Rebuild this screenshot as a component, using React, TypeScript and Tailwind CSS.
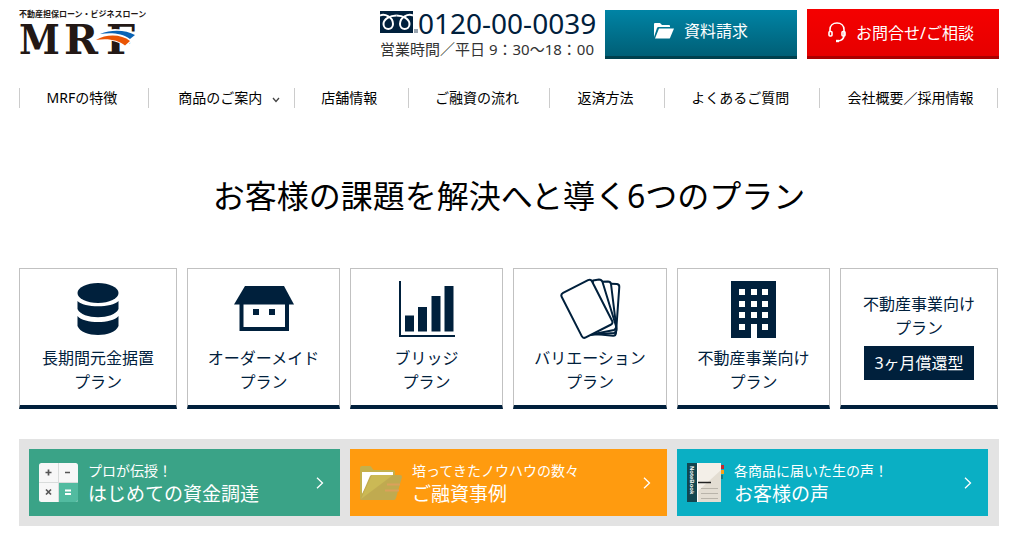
import React from "react";

const navItems = [
	{ label: "MRFの特徴" },
	{ label: "商品のご案内", hasMenu: true },
	{ label: "店舗情報" },
	{ label: "ご融資の流れ" },
	{ label: "返済方法" },
	{ label: "よくあるご質問" },
	{ label: "会社概要／採用情報" },
];

function Logo() {
	return (
		<a href="#" className="block w-32 text-[#231815]">
			<span className="block text-[8px] leading-[10px] font-bold whitespace-nowrap">不動産担保ローン・ビジネスローン</span>
			<svg viewBox="0 0 128 48" className="block w-32 h-12 overflow-visible" role="img" aria-label="MRF">
				<g fill="#231815" fontFamily="'DejaVu Serif', serif" fontWeight="bold" fontSize="41">
					<text x="0" y="35" fontFamily="'DejaVu Serif Condensed', 'DejaVu Serif', serif">M</text>
					<text x="45" y="35">R</text>
					<text x="87" y="35">F</text>
				</g>
				<path d="M76 21 C82 14 88 10 96 10 C105 10 112 13 119 16 L107 28 C99 22 89 20 76 21Z" fill="#fff" />
				<path d="M81 15 C93 10 107 11 116 16 L111 20 C103 14.500 93 13.500 81 15Z" fill="#0a63b4" />
				<path d="M77 21 C88 14.500 103 15.500 111 22 L106 26.500 C99 21 89 19 77 21Z" fill="#ea5504" />
			</svg>
		</a>
	);
}

function FreeDial() {
	return (
		<svg viewBox="0 0 38 22" className="w-[38px] h-[22px] shrink-0" aria-hidden="true">
			<rect width="33" height="22" fill="#00203c" />
			<g fill="none" stroke="#fff" strokeWidth="2">
				<path d="M0 4.500 C5 2.500 13 6 13 13 C13 19.500 3.500 19.500 3.500 13 C3.500 8 10 4.500 16.500 4.500" />
				<path d="M33 4.500 C28 2.500 20 6 20 13 C20 19.500 29.500 19.500 29.500 13 C29.500 8 23 4.500 16.500 4.500" />
			</g>
			<rect x="34" y="18" width="4" height="4" fill="#9aa5b0" />
		</svg>
	);
}

function FolderOpen() {
	return (
		<svg viewBox="0 0 20 16" className="w-5 h-4" fill="#fff" aria-hidden="true">
			<path d="M0 14 V1 Q0 0 1 0 H6 L8 2 H15 Q16 2 16 3 V4 H4.500 Q3.500 4 3 5Z" />
			<path d="M5 5.500 H20 L16 15 Q15.700 15.500 15 15.500 H1Z" />
		</svg>
	);
}

function Headset() {
	return (
		<svg viewBox="0 0 18 21" className="w-[18px] h-[21px]" fill="none" stroke="#fff" strokeWidth="1.6" aria-hidden="true">
			<path d="M2 10 V7.500 C2 3.500 5 1 9 1 S16 3.500 16 7.500 V13 C16 16.500 14 18.500 10 19" />
			<rect x="1" y="9.500" width="3" height="4.500" rx="1" />
			<rect x="14" y="9.500" width="3" height="4.500" rx="1" />
			<path d="M8 19 H11" strokeWidth="2.4" />
		</svg>
	);
}

function Chevron() {
	return (
		<svg viewBox="0 0 8 12" className="w-2 h-3 ml-auto mr-4 shrink-0" fill="none" stroke="#fff" strokeWidth="1.3" aria-hidden="true">
			<path d="M1 0.700 L6.500 6 L1 11.300" />
		</svg>
	);
}

function DatabaseIcon() {
	return (
		<svg viewBox="0 0 42 52" className="w-[42px] h-[52px]" fill="#00203c" aria-hidden="true">
			<ellipse cx="21" cy="10" rx="20.500" ry="10" />
			<path d="M0.500 18 C7 25 35 25 41.500 18 V26 C37 37 5 37 0.500 26Z" />
			<path d="M0.500 33 C7 41 35 41 41.500 33 V43 C37 55 5 55 0.500 43Z" />
		</svg>
	);
}

function HouseIcon() {
	return (
		<svg viewBox="0 0 60 46" className="w-[60px] h-[46px]" fill="#00203c" aria-hidden="true">
			<path d="M11 0 H50 L60 18.500 H0Z" />
			<path d="M7.500 18 V43 H53 V18" fill="none" stroke="#00203c" strokeWidth="4" />
			<path d="M19 23 h6 v6 h-6z M35 23 h6 v6 h-6z" />
		</svg>
	);
}

function ChartIcon() {
	return (
		<svg viewBox="0 0 56 56" className="w-14 h-14" fill="#00203c" aria-hidden="true">
			<path d="M0 0 H2 V54 H56 V56 H0Z" />
			<path d="M6 34.500 h9 V50.500 H6z M19 26 h9 V50.500 h-9z M32.500 15 h9 V50.500 h-9z M45.500 5 h9 V50.500 h-9z" />
		</svg>
	);
}

function CardsIcon() {
	return (
		<svg viewBox="0 0 62 62" className="w-[62px] h-[62px]" fill="#fff" stroke="#00203c" strokeWidth="2" strokeLinejoin="round" aria-hidden="true">
			<path d="M34 5 L58 6 Q60.500 6.500 60.300 9 L57 55 Q56.500 58 54 57.700 L26 55Z" />
			<path d="M34 4 L49 3.500 Q51.500 3.500 52 6 L57.500 51 Q57.500 54 55 55 L30 57Z" />
			<path d="M34 2.500 L40 1.500 Q42.500 1.500 43.500 4 L57 48 Q57.500 51 55 52 L30 57Z" />
			<rect x="11" y="5.800" width="34" height="50" rx="3" transform="rotate(-27 28 31)" />
		</svg>
	);
}

function BuildingIcon() {
	return (
		<svg viewBox="0 0 45 57" className="w-[45px] h-[57px]" aria-hidden="true">
			<rect width="45" height="57" fill="#00203c" />
			<path
				fill="#fff"
				d="M8 8h6v6H8z M20 8h6v6h-6z M31 8h6v6h-6z M8 20h6v6H8z M20 20h6v6h-6z M31 20h6v6h-6z M8 31h6v6H8z M20 31h6v6h-6z M31 31h6v6h-6z M8 43h6v6H8z M31 43h6v6h-6z M20 43h6v14h-6z"
			/>
		</svg>
	);
}

function CalculatorIcon() {
	return (
		<svg viewBox="0 0 39 39" className="w-[39px] h-[39px] shrink-0" aria-hidden="true">
			<rect width="39" height="39" rx="2.500" fill="#f7f7f7" />
			<path d="M20 20 H39 V36.500 Q39 39 36.500 39 H20Z" fill="#52bba0" />
			<path d="M19.500 0 V39 M0 19.500 H39" stroke="#d9dcdb" />
			<path d="M6.500 9.500h6 M9.500 6.500v6 M26 9.500h5 M7 26.500l5 5 M12 26.500l-5 5" stroke="#555" strokeWidth="1.7" />
			<path d="M26 27.500h6 M26 31h6" stroke="#fff" strokeWidth="1.8" />
		</svg>
	);
}

function CaseFolderIcon() {
	return (
		<svg viewBox="0 0 42 34" className="w-[42px] h-[34px] shrink-0" aria-hidden="true">
			<path d="M0 32 V2 Q0 0 2 0 H10 Q11 0 12 2 L13.500 4 H33 Q35 4 35 6 V10 H9 L1 34Z" fill="#c5b04b" />
			<path d="M2 6 H33 V10 H12 L2 28Z" fill="#fff" />
			<path d="M10 10 Q10.500 9 12 9 H40 Q42 9 42 11 L36 32 Q35.500 34 34 34 H1 Q0 34 0.500 32Z" fill="#c0aa50" />
			<path d="M12 9 H33 L1 33Z" fill="#cbb955" />
			<path d="M27 18.500h13 M25 24.500h14" stroke="#dca05b" strokeWidth="2" />
		</svg>
	);
}

function NotebookIcon() {
	return (
		<svg viewBox="0 0 37 39" className="w-[37px] h-[39px] shrink-0" aria-hidden="true">
			<path d="M32 2h5v4h-5z" fill="#c1272d" />
			<path d="M32 7h5v4h-5z" fill="#f7a21b" />
			<path d="M32 12h4v4h-4z" fill="#167b86" />
			<rect x="10" width="24" height="39" fill="#e3ddd2" />
			<path d="M11 0 H34 V7 L11 28Z" fill="#f3efe8" />
			<rect width="10" height="39" fill="#124650" />
			<path d="M10.500 0v39" stroke="#fff" />
			<path d="M11 19.500h13" stroke="#222" strokeWidth="1.5" />
			<path d="M14 25.500h17 M14 30.500h17 M14 35.500h17" stroke="#b9b4aa" />
			<text transform="translate(3 3) rotate(90)" fontSize="6" fontWeight="bold" fontFamily="'Liberation Sans', sans-serif" fill="#fff">
				NoteBook
			</text>
		</svg>
	);
}

const plans = [
	{ name: "長期間元金据置", icon: <DatabaseIcon /> },
	{ name: "オーダーメイド", icon: <HouseIcon /> },
	{ name: "ブリッジ", icon: <ChartIcon /> },
	{ name: "バリエーション", icon: <CardsIcon /> },
	{ name: "不動産事業向け", icon: <BuildingIcon /> },
	{ name: "不動産事業向け", badge: "3ヶ月償還型" },
];

const banners = [
	{ lead: "プロが伝授！", title: "はじめての資金調達", color: "bg-[#3aa387]", icon: <CalculatorIcon /> },
	{ lead: "培ってきたノウハウの数々", title: "ご融資事例", color: "bg-[#ff9b0f]", icon: <CaseFolderIcon /> },
	{ lead: "各商品に届いた生の声！", title: "お客様の声", color: "bg-[#0aafc4]", icon: <NotebookIcon /> },
];

export default function App() {
	return (
		<div className="bg-white pl-[19px] pr-[21px] pb-7 text-black font-['Noto_Sans','Noto_Sans_CJK_JP',sans-serif]">
			<header className="flex items-start justify-between pt-[9px]">
				<Logo />
				<div className="flex items-start">
					<div className="mr-2.5 w-[215px]">
						<div className="flex h-7 items-start text-[28px] leading-7 whitespace-nowrap text-[#00203c]">
							<span className="pt-0.5">
								<FreeDial />
							</span>
							<a href="tel:0120000039">0120-00-0039</a>
						</div>
						<p className="text-[15px] leading-6 whitespace-nowrap text-[#333]">営業時間／平日 9：30～18：00</p>
					</div>
					<div className="flex gap-2.5 text-base text-white">
						<a
							href="#"
							className="mt-px flex h-[49px] w-48 items-center justify-center gap-2.5 border-b-3 border-[#00404d] bg-linear-to-b from-[#0084a5] to-[#005f76] pb-1"
						>
							<FolderOpen />
							資料請求
						</a>
						<a
							href="#"
							className="flex h-[50px] w-48 items-center justify-center gap-2.5 border-b-3 border-[#ab0000] bg-linear-to-b from-[#f50000] to-[#e60000] pr-1"
						>
							<Headset />
							お問合せ/ご相談
						</a>
					</div>
				</div>
			</header>

			<nav className="mt-[21px] pr-px">
				<ul className="grid grid-cols-[129fr_146fr_114fr_142fr_115fr_155fr_178fr] border-r border-[#ccc] text-sm leading-5">
					{navItems.map((item) => (
						<li key={item.label} className="border-l border-[#ccc] text-center whitespace-nowrap last:pl-2">
							<a href="#" className={`flex items-center justify-center gap-2.5 ${item.hasMenu ? "pl-4" : "pr-1"}`}>
								{item.label}
								{item.hasMenu && (
									<svg viewBox="0 0 8 6" className="mt-1 h-1.5 w-2" fill="none" stroke="#444" strokeWidth="1.3" aria-hidden="true">
										<path d="M1 1 L4 4.500 L7 1" />
									</svg>
								)}
							</a>
						</li>
					))}
				</ul>
			</nav>

			<main>
				<h1 className="mt-16 text-center text-[32px] leading-12">お客様の課題を解決へと導く6つのプラン</h1>

				<ul className="mt-12 grid grid-cols-[158fr_153fr_153fr_154fr_153fr_158fr] gap-2.5 pr-px text-base leading-6 text-[#00203c]">
					{plans.map((plan, i) => (
						<li key={i}>
							<a
								href="#"
								className="flex h-[141px] flex-col items-center justify-center border border-b-4 border-[#c1c1c1] border-b-[#00203c] pb-0.5 text-center"
							>
								{plan.icon && <span className="flex h-[62px] items-center justify-center">{plan.icon}</span>}
								<span className={plan.icon ? "mt-1.5" : ""}>
									{plan.name}
									<br />
									プラン
								</span>
								{plan.badge && <span className="mt-1.5 bg-[#00203c] px-2.5 py-[5px] text-white">{plan.badge}</span>}
							</a>
						</li>
					))}
				</ul>

				<div className="mt-[30px] grid grid-cols-[311fr_317fr_311fr] gap-2.5 bg-[#e3e3e3] py-2.5 pl-2.5 pr-[11px]">
					{banners.map((banner) => (
						<a key={banner.title} href="#" className={`flex items-center gap-2.5 pl-2.5 h-[67px] text-white ${banner.color}`}>
							{banner.icon}
							<span className="whitespace-nowrap">
								<span className="block text-sm leading-[22px]">{banner.lead}</span>
								<span className="block text-[19px] leading-6">{banner.title}</span>
							</span>
							<Chevron />
						</a>
					))}
				</div>
			</main>
		</div>
	);
}
